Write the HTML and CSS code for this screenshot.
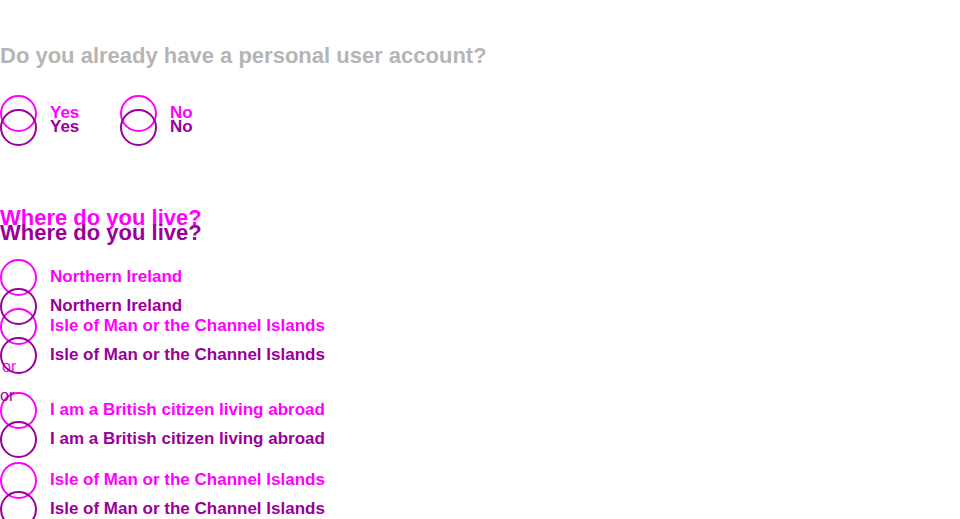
FILE: index.html
```html
<!DOCTYPE html>
<html lang="en">
<head>
<meta charset="utf-8">
<title>Account questions</title>
<link rel="stylesheet" href="styles.css">
</head>
<body>
<main class="page">
  <h1 class="question question--shared">Do you already have a personal user account?</h1>
  <div class="diff">
    <section class="layer layer--a">
      <div class="inline-radios">
        <label class="radio radio--yes"><span class="radio__circle"></span><span class="radio__label">Yes</span></label>
        <label class="radio"><span class="radio__circle"></span><span class="radio__label">No</span></label>
      </div>
      <h2 class="question question--live">Where do you live?</h2>
      <div class="radios">
        <label class="radio"><span class="radio__circle"></span><span class="radio__label">Northern Ireland</span></label>
        <label class="radio"><span class="radio__circle"></span><span class="radio__label">Isle of Man or the Channel Islands</span></label>
        <p class="divider">or</p>
        <label class="radio"><span class="radio__circle"></span><span class="radio__label">I am a British citizen living abroad</span></label>
        <label class="radio radio--last"><span class="radio__circle"></span><span class="radio__label">Isle of Man or the Channel Islands</span></label>
      </div>
    </section>
    <section class="layer layer--b">
      <div class="inline-radios">
        <label class="radio radio--yes"><span class="radio__circle"></span><span class="radio__label">Yes</span></label>
        <label class="radio"><span class="radio__circle"></span><span class="radio__label">No</span></label>
      </div>
      <h2 class="question question--live">Where do you live?</h2>
      <div class="radios">
        <label class="radio"><span class="radio__circle"></span><span class="radio__label">Northern Ireland</span></label>
        <label class="radio"><span class="radio__circle"></span><span class="radio__label">Isle of Man or the Channel Islands</span></label>
        <p class="divider">or</p>
        <label class="radio"><span class="radio__circle"></span><span class="radio__label">I am a British citizen living abroad</span></label>
        <label class="radio radio--last"><span class="radio__circle"></span><span class="radio__label">Isle of Man or the Channel Islands</span></label>
      </div>
    </section>
  </div>
</main>
</body>
</html>
```
FILE: styles.css
```css
* { box-sizing: border-box; }
html, body { margin: 0; padding: 0; background: #ffffff; }
body {
  font-family: "Liberation Sans", Arial, sans-serif;
  width: 960px;
  height: 519px;
  overflow: hidden;
}
.page { padding: 43px 0 0 0; }
.question {
  margin: 0;
  font-size: 22px;
  line-height: 26px;
  font-weight: 700;
  letter-spacing: 0;
}
.question--shared { color: #b5b5b5; }
.diff { display: grid; }
.layer { grid-area: 1 / 1; display: flex; flex-direction: column; align-items: flex-start; }
.layer--a { color: #ff00ff; padding-top: 26px; }
.layer--b { color: #990099; padding-top: 40px; }
.inline-radios { display: flex; }
.radio--yes { width: 120px; }
.radio {
  display: flex;
  align-items: center;
  gap: 13px;
  height: 37px;
}
.radio__circle {
  width: 37px;
  height: 37px;
  border: 2px solid currentColor;
  border-radius: 50%;
  flex: none;
}
.radio__label {
  font-size: 17px;
  line-height: 17px;
  font-weight: 700;
  position: relative;
  top: -1px;
}
.layer--a .question--live { margin-top: 73px; }
.layer--b .question--live { margin-top: 74px; }
.radios { display: flex; flex-direction: column; gap: 12px; }
.layer--a .radios { margin-top: 28px; }
.layer--b .radios { margin-top: 42px; }
.divider {
  margin: 0 0 3px 0;
  font-size: 16px;
  line-height: 20px;
}
.layer--a .divider { padding-left: 2px; }
.radio--last { margin-top: 21px; }
```
